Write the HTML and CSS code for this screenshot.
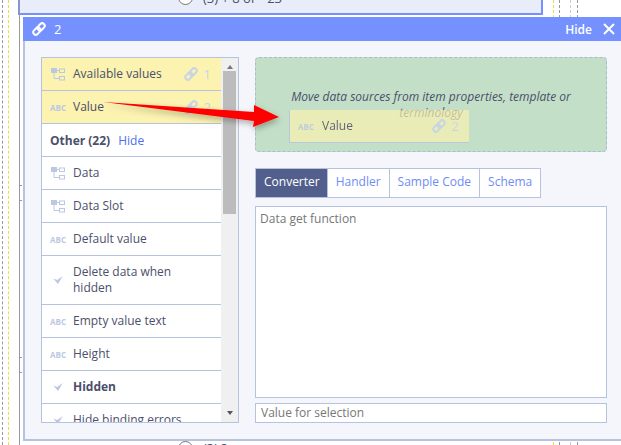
FILE: index.html
```html
<!DOCTYPE html>
<html>
<head>
    <title>Binding Editor</title>
    <link rel="stylesheet" href="styles.css">
</head>
<body>

<svg width="0" height="0" class="defs">
    <symbol id="i-link" viewBox="0 0 14 14">
        <g transform="rotate(-45 7 7)" fill="none" stroke="currentColor" stroke-width="2">
            <rect x="0" y="4.5" width="8" height="5" rx="2.5"/>
            <rect x="6" y="4.5" width="8" height="5" rx="2.5"/>
        </g>
    </symbol>
    <symbol id="i-tree" viewBox="0 0 14 13">
        <rect x="0" y="0" width="6" height="5" fill="currentColor"/>
        <rect x="8.5" y="1" width="5" height="3.5" fill="none" stroke="currentColor"/>
        <rect x="8.5" y="8.5" width="5" height="3.5" fill="none" stroke="currentColor"/>
        <path d="M6 2.5 H8.5 M3 5 V10.5 H8.5" fill="none" stroke="currentColor"/>
    </symbol>
    <symbol id="i-check" viewBox="0 0 12 10">
        <path d="M0 3 L5 5 L12 0 L6 10 Z" fill="currentColor"/>
    </symbol>
</svg>

<div class="backdrop">
    <div class="top-panel"><span class="radio"></span><span>(3) + 8 or - 23</span></div>
    <div class="guide guide-a"></div>
    <div class="guide guide-b"></div>
    <div class="guide guide-c"></div>
    <div class="guide guide-d"></div>
    <div class="guide guide-e"></div>
    <div class="guide guide-f"></div>
    <div class="guide guide-g"></div>
    <div class="tick tick-a"></div>
    <div class="tick tick-b"></div>
    <div class="tick tick-c"></div>
    <div class="tick tick-d"></div>
    <div class="bottom-item"><span class="radio"></span><span>(3) ?</span></div>
</div>

<div class="dialog">
    <div class="dialog-head">
        <svg class="head-icon"><use href="#i-link"/></svg>
        <span class="head-title">2</span>
        <span class="head-hide">Hide</span>
        <svg class="head-close" viewBox="0 0 12 12"><path d="M1 1 L11 11 M11 1 L1 11" stroke="#fff" stroke-width="2"/></svg>
    </div>

    <div class="dialog-body">
        <div class="prop-list">
            <div class="prop-rows">
                <div class="row used">
                    <svg class="row-icon"><use href="#i-tree"/></svg>
                    <span class="row-name">Available values</span>
                    <svg class="row-link"><use href="#i-link"/></svg>
                    <span class="row-num">1</span>
                </div>
                <div class="row used">
                    <span class="abc">ABC</span>
                    <span class="row-name">Value</span>
                    <svg class="row-link"><use href="#i-link"/></svg>
                    <span class="row-num">2</span>
                </div>
                <div class="row group">
                    <b>Other (22)</b>
                    <span class="group-hide">Hide</span>
                </div>
                <div class="row">
                    <svg class="row-icon"><use href="#i-tree"/></svg>
                    <span class="row-name">Data</span>
                </div>
                <div class="row">
                    <svg class="row-icon"><use href="#i-tree"/></svg>
                    <span class="row-name">Data Slot</span>
                </div>
                <div class="row">
                    <span class="abc">ABC</span>
                    <span class="row-name">Default value</span>
                </div>
                <div class="row tall">
                    <svg class="row-check"><use href="#i-check"/></svg>
                    <span class="row-name">Delete data when hidden</span>
                </div>
                <div class="row">
                    <span class="abc">ABC</span>
                    <span class="row-name">Empty value text</span>
                </div>
                <div class="row">
                    <span class="abc">ABC</span>
                    <span class="row-name">Height</span>
                </div>
                <div class="row">
                    <svg class="row-check"><use href="#i-check"/></svg>
                    <span class="row-name"><b>Hidden</b></span>
                </div>
                <div class="row">
                    <svg class="row-check"><use href="#i-check"/></svg>
                    <span class="row-name">Hide binding errors</span>
                </div>
            </div>
            <div class="scrollbar">
                <span class="arrow-up"></span>
                <div class="thumb"></div>
                <span class="arrow-down"></span>
            </div>
        </div>

        <div class="editor">
            <div class="drop-zone">
                <p>Move data sources from item properties, template or terminology</p>
            </div>
            <div class="tabs">
                <span class="tab active">Converter</span>
                <span class="tab">Handler</span>
                <span class="tab">Sample Code</span>
                <span class="tab">Schema</span>
            </div>
            <div class="code-box">Data get function</div>
            <div class="value-box">Value for selection</div>
        </div>
    </div>
</div>

<!-- item being dragged -->
<div class="ghost">
    <span class="abc">ABC</span>
    <span class="row-name">Value</span>
    <svg class="row-link"><use href="#i-link"/></svg>
    <span class="row-num">2</span>
</div>

<svg class="red-arrow" viewBox="0 0 190 40">
    <defs>
        <filter id="arrowShadow" x="-10%" y="-50%" width="120%" height="220%">
            <feDropShadow dx="1" dy="3" stdDeviation="3" flood-color="#000" flood-opacity="0.3"/>
        </filter>
    </defs>
    <path d="M1 1 L152 11 L152 4 L177 16 L151 26 L152 20 Z" fill="#fe0000" filter="url(#arrowShadow)"/>
</svg>

</body>
</html>
```

FILE: styles.css
```css
html, body {
    margin: 0;
    padding: 0;
}

body {
    width: 621px;
    height: 445px;
    overflow: hidden;
    position: relative;
    background-color: #fff;
    font-family: "Open Sans", sans-serif;
    font-size: 12px;
    color: #4b4f6b;
}

.defs {
    position: absolute;
}

.backdrop {
    position: absolute;
    left: 0;
    top: 0;
    width: 621px;
    height: 445px;
    overflow: hidden;
}

.top-panel {
    position: absolute;
    left: 18px;
    top: -20px;
    width: 363px;
    height: 31px;
    border: 2px solid #7491ff;
    background-color: #e9edfa;
    display: flex;
    align-items: center;
    gap: 10px;
    padding-left: 158px;
    font-size: 13px;
}

.bottom-item {
    position: absolute;
    left: 178px;
    top: 441px;
    display: flex;
    align-items: flex-start;
    gap: 10px;
    font-size: 13px;
    line-height: 15px;
}

.radio {
    display: inline-block;
    width: 13px;
    height: 13px;
    border: 1px solid #777;
    border-radius: 50%;
    background-color: #fff;
}

.guide {
    position: absolute;
    top: 0;
    bottom: 0;
    width: 0;
    border-left: 1px dashed #999;
}

.guide-a { left: 2px; }
.guide-b { left: 8px; border-color: #f5d742; }
.guide-c { left: 19px; border-left-style: solid; }
.guide-d { left: 553px; border-color: #f5d742; }
.guide-e { left: 559px; }
.guide-f { left: 570px; border-color: #ccc; }
.guide-g { left: 577px; }

.tick {
    position: absolute;
    left: 19px;
    width: 3px;
    height: 1px;
    background-color: #999;
}

.tick-a { top: 185px; }
.tick-b { top: 200px; }
.tick-c { top: 357px; }
.tick-d { top: 372px; }

.dialog {
    position: absolute;
    left: 23px;
    top: 17px;
    width: 598px;
    height: 424px;
    box-sizing: border-box;
    border-left: 2px solid #b5c3e0;
    border-bottom: 2px solid #b5c3e0;
    background-color: #f4f6fb;
    display: flex;
    flex-direction: column;
}

.dialog-head {
    height: 24px;
    flex: none;
    margin-left: -2px;
    background-color: #7491ff;
    color: #fff;
    display: flex;
    align-items: center;
    padding: 0 6px 0 9px;
    font-size: 12px;
    font-weight: 600;
}

.head-icon {
    width: 14px;
    height: 14px;
    margin-right: 8px;
}

.head-title {
    flex: 1;
    font-weight: 400;
    font-size: 13px;
}

.head-close {
    width: 12px;
    height: 12px;
    margin-left: 11px;
}

.dialog-body {
    display: flex;
    gap: 16px;
    padding: 16px 14px 16px 16px;
}

.prop-list {
    width: 198px;
    height: 366px;
    box-sizing: border-box;
    flex: none;
    border: 1px solid #b5c3e0;
    background-color: #fff;
    display: flex;
    overflow: hidden;
}

.prop-rows {
    flex: 1;
    min-width: 0;
}

.row {
    min-height: 32px;
    border-bottom: 1px solid #b5c3e0;
    display: flex;
    align-items: center;
    padding: 0 10px 0 8px;
}

.row.tall {
    padding-top: 8px;
    padding-bottom: 8px;
}

.row.used {
    background-color: #fcf3b1;
}

.row.group {
    gap: 8px;
}

.group-hide {
    color: #4e6ef2;
}

.row-icon {
    width: 14px;
    height: 13px;
    color: #bcc8e2;
    margin: 0 8px 0 1px;
    flex: none;
}

.row-check {
    width: 10px;
    height: 8px;
    color: #bcc8e2;
    margin: 0 10px 0 3px;
    flex: none;
}

.abc {
    width: 16px;
    margin-right: 7px;
    flex: none;
    color: #bcc8e2;
    font-size: 8px;
    font-weight: 700;
}

.row-name {
    flex: 1;
    line-height: 16px;
}

.row-link {
    width: 14px;
    height: 14px;
    color: #c9d3e8;
    flex: none;
}

.row-num {
    width: 13px;
    text-align: right;
    color: #c9d3e8;
    font-size: 13px;
}

.scrollbar {
    width: 17px;
    flex: none;
    background-color: #f0f0f0;
    display: flex;
    flex-direction: column;
    align-items: center;
    position: relative;
}

.thumb {
    width: 13px;
    height: 143px;
    background-color: #bcbcbc;
    margin-top: 2px;
}

.arrow-up {
    margin-top: 7px;
    border: 3.5px solid transparent;
    border-top: 0;
    border-bottom: 4px solid #777;
    width: 0;
}

.arrow-down {
    position: absolute;
    bottom: 7px;
    border: 3.5px solid transparent;
    border-bottom: 0;
    border-top: 4px solid #555;
    width: 0;
}

.editor {
    width: 352px;
    flex: none;
    display: flex;
    flex-direction: column;
}

.drop-zone {
    height: 95px;
    box-sizing: border-box;
    border: 1px dashed #a9bcc9;
    border-radius: 4px;
    background-color: #c4dfc8;
    padding: 31px 20px 0;
    text-align: center;
}

.drop-zone p {
    margin: 0;
    font-style: italic;
    line-height: 16px;
}

.tabs {
    display: flex;
    margin-top: 16px;
    align-self: flex-start;
    border: 1px solid #b5c3e0;
    height: 30px;
    box-sizing: border-box;
    background-color: #fff;
}

.tab {
    padding: 0 8px;
    line-height: 25px;
    color: #6f8cf5;
    border-left: 1px solid #b5c3e0;
}

.tab:first-child {
    border-left: 0;
}

.tab.active {
    padding-right: 7px;
    background-color: #525f8c;
    color: #fff;
}

.code-box {
    margin-top: 8px;
    height: 192px;
    box-sizing: border-box;
    border: 1px solid #b5c3e0;
    background-color: #fff;
    padding: 3px 4px;
    color: #777;
}

.value-box {
    margin-top: 5px;
    height: 20px;
    box-sizing: border-box;
    border: 1px solid #b5c3e0;
    background-color: #fff;
    padding: 0 5px;
    line-height: 18px;
    color: #777;
}

.ghost {
    position: absolute;
    left: 289px;
    top: 110px;
    width: 180px;
    height: 33px;
    box-sizing: border-box;
    border-bottom: 1px solid #b5c3e0;
    border-left: 1px solid #b5c3e0;
    background-color: rgba(252, 243, 177, 0.8);
    display: flex;
    align-items: center;
    padding: 0 10px 0 8px;
    opacity: 0.85;
}

.ghost .abc {
    margin-right: 8px;
}

.red-arrow {
    position: absolute;
    left: 102px;
    top: 101px;
    width: 190px;
    height: 40px;
}
```
